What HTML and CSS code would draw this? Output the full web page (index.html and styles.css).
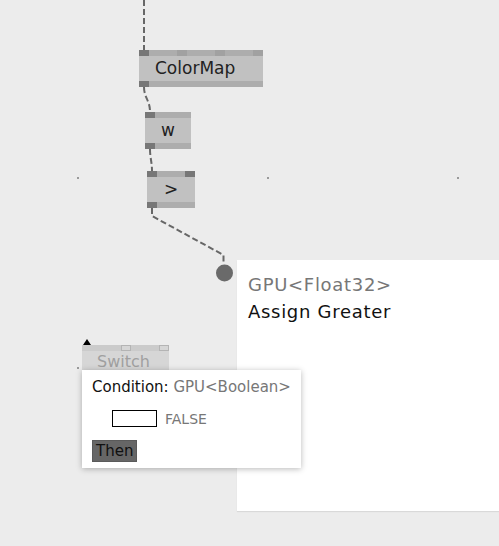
FILE: index.html
```html
<!DOCTYPE html>
<html lang="en">

<head>
    <meta charset="utf-8" />
    <title>Patch</title>
    <link rel="stylesheet" href="styles.css">
</head>

<body>
    <div class="canvas">
        <svg class="wires" width="499" height="546" viewBox="0 0 499 546">
            <g class="grid">
                <rect x="77" y="177" width="2" height="2" />
                <rect x="267" y="177" width="2" height="2" />
                <rect x="457" y="177" width="2" height="2" />
                <rect x="77" y="367" width="2" height="2" />
            </g>
            <g class="links">
                <path d="M144 0 V50" />
                <path d="M144 87 C144 98 150 100 150 112" />
                <path d="M150 149 C150 158 152 162 152 171" />
                <path d="M152 208 V216 L223.5 255 V264" />
            </g>
            <circle cx="224.5" cy="273" r="8.5" class="outlet" />
        </svg>

        <div class="node node-colormap">
            <div class="ports">
                <span class="pin dark"></span>
                <span class="pin"></span>
                <span class="pin"></span>
                <span class="pin"></span>
            </div>
            <div class="label">ColorMap</div>
            <div class="ports">
                <span class="pin dark"></span>
            </div>
        </div>

        <div class="node node-w">
            <div class="ports">
                <span class="pin dark"></span>
            </div>
            <div class="label">w</div>
            <div class="ports">
                <span class="pin dark"></span>
            </div>
        </div>

        <div class="node node-gt">
            <div class="ports">
                <span class="pin dark"></span>
                <span class="pin dark"></span>
            </div>
            <div class="label">&gt;</div>
            <div class="ports">
                <span class="pin dark"></span>
            </div>
        </div>

        <div class="node node-switch">
            <div class="ports">
                <span class="pin blank"><i class="arrow"></i></span>
                <span class="pin hollow"></span>
                <span class="pin hollow"></span>
            </div>
            <div class="label">Switch</div>
            <div class="ports">
                <span class="pin dim"></span>
            </div>
        </div>

        <section class="inspector">
            <div class="type">GPU&lt;Float32&gt;</div>
            <div class="title">Assign Greater</div>
        </section>

        <div class="popup">
            <div class="row">Condition: <span class="muted">GPU&lt;Boolean&gt;</span></div>
            <div class="row toggle">
                <span class="check"></span>
                <span class="muted small">FALSE</span>
            </div>
            <div class="row">
                <button class="then">Then</button>
            </div>
        </div>
    </div>
</body>

</html>
```

FILE: styles.css
```css
html,
body {
    margin: 0;
    padding: 0;
    background-color: #ececec;
}

body {
    font-family: "DejaVu Sans", Verdana, sans-serif;
    color: #111;
}

.canvas {
    position: relative;
    width: 499px;
    height: 546px;
    overflow: hidden;
    background-color: #ececec;
}

.wires {
    position: absolute;
    left: 0;
    top: 0;
}

.grid rect {
    fill: #9a9a9a;
}

.links path {
    fill: none;
    stroke: #676767;
    stroke-width: 2;
    stroke-dasharray: 6 3;
}

.outlet {
    fill: #6a6a6a;
}

/* nodes */
.node {
    position: absolute;
    display: flex;
    flex-direction: column;
    background-color: #c1c1c1;
    height: 37px;
    box-sizing: border-box;
}

.node .ports {
    display: flex;
    justify-content: space-between;
    height: 6px;
    background-color: #adadad;
}

.node .pin {
    position: relative;
    width: 10px;
    height: 6px;
    background-color: #a1a1a1;
}

.node .pin.dark {
    background-color: #777;
}

.node .pin.blank {
    background-color: transparent;
}

.node .pin.dim {
    background-color: #b0b0b0;
}

.node .pin.hollow {
    background-color: #d6d6d6;
    border: 1px solid #b4b4b4;
    box-sizing: border-box;
}

.node .label {
    height: 25px;
    line-height: 25px;
    font-size: 17px;
    color: #222;
    text-align: center;
    white-space: nowrap;
}

.node-colormap {
    left: 139px;
    top: 50px;
    width: 124px;
}

.node-colormap .label {
    text-align: left;
    padding-left: 16px;
}

.node-w {
    left: 145px;
    top: 112px;
    width: 46px;
}

.node-gt {
    left: 147px;
    top: 171px;
    width: 48px;
}

/* the switch node sits faded behind its popup */
.node-switch {
    left: 82px;
    top: 345px;
    width: 87px;
    background-color: #d6d6d6;
}

.node-switch .ports {
    background-color: #cbcbcb;
}

.node-switch .label {
    font-size: 16px;
    line-height: 21px;
    color: #a0a0a0;
    text-align: left;
    padding-left: 15px;
}

.arrow {
    position: absolute;
    left: 1px;
    top: -6px;
    width: 0;
    height: 0;
    border-left: 4px solid transparent;
    border-right: 4px solid transparent;
    border-bottom: 6px solid #000;
}

/* inspector */
.inspector {
    position: absolute;
    left: 237px;
    top: 260px;
    right: 0;
    height: 251px;
    padding: 11px 11px;
    box-sizing: border-box;
    background-color: #fff;
    box-shadow: 0 1px 1px rgba(0, 0, 0, 0.08);
    font-size: 18px;
    line-height: 27px;
    letter-spacing: 0.7px;
}

.inspector .type {
    color: #777;
}

.inspector .title {
    color: #111;
}

/* popup */
.popup {
    position: absolute;
    left: 82px;
    top: 370px;
    width: 219px;
    height: 98px;
    padding: 7px 10px 0;
    box-sizing: border-box;
    background-color: #fff;
    box-shadow: 0 1px 6px rgba(0, 0, 0, 0.28);
    font-size: 15px;
    display: flex;
    flex-direction: column;
}

.popup .row {
    line-height: 20px;
    white-space: nowrap;
}

.popup .muted {
    color: #777;
}

.popup .small {
    font-size: 14px;
}

.popup .toggle {
    display: flex;
    align-items: center;
    gap: 8px;
    margin: 13px 0 0 20px;
    height: 17px;
}

.popup .check {
    width: 45px;
    height: 17px;
    border: 1px solid #000;
    box-sizing: border-box;
    background-color: #fff;
}

.popup .then {
    margin-top: 13px;
    display: block;
    height: 22px;
    padding: 0 3px;
    border: 1px solid #5a5a5a;
    background-color: #666;
    color: #111;
    font-family: "DejaVu Sans", Verdana, sans-serif;
    font-size: 15px;
    line-height: 20px;
    cursor: pointer;
}
```
